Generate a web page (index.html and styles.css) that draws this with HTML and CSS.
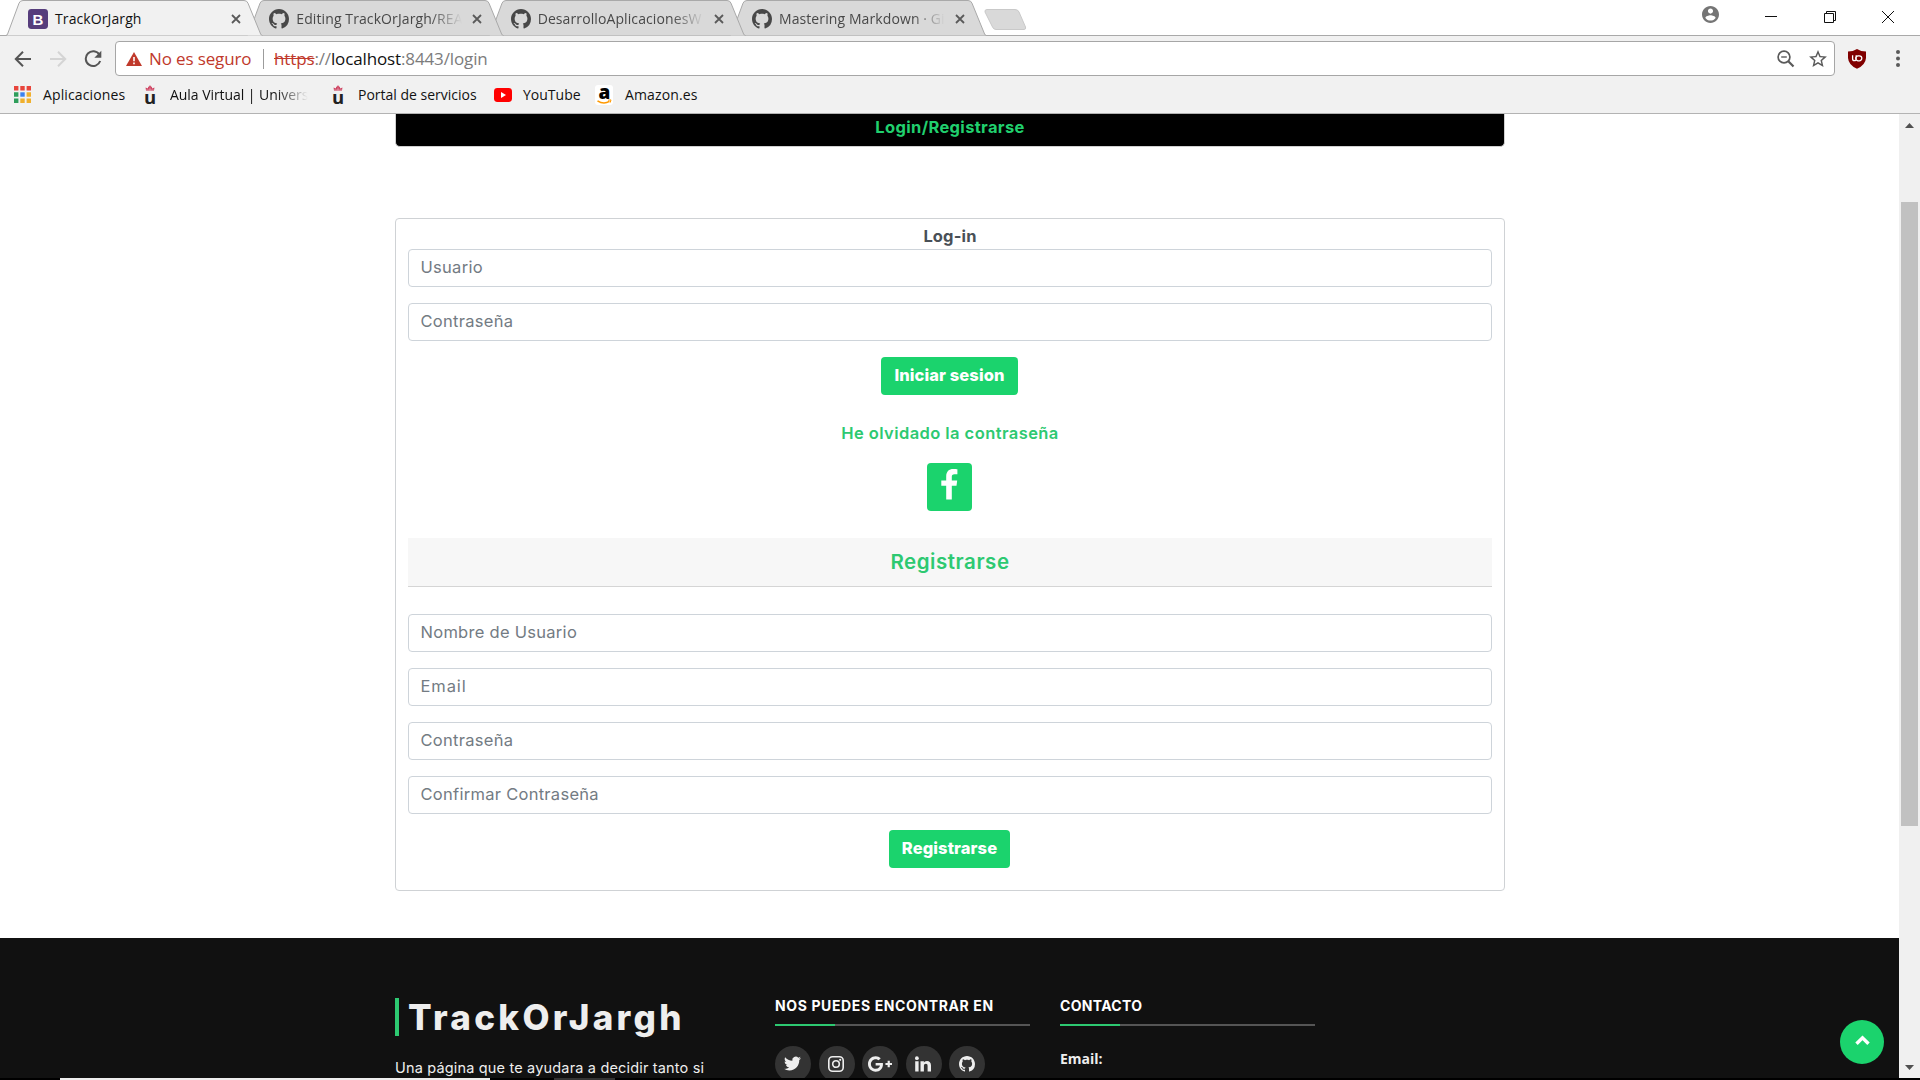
FILE: index.html
```
<!DOCTYPE html>
<html lang="es">
<head>
<meta charset="utf-8">
<title>TrackOrJargh</title>
<link rel="stylesheet" href="styles.css">
</head>
<body>
<svg class="defs" width="0" height="0">
  <symbol id="github" viewBox="0 0 16 16"><path d="M8 0C3.58 0 0 3.58 0 8c0 3.54 2.29 6.53 5.47 7.59.4.07.55-.17.55-.38 0-.19-.01-.82-.01-1.49-2.01.37-2.53-.49-2.69-.94-.09-.23-.48-.94-.82-1.13-.28-.15-.68-.52-.01-.53.63-.01 1.08.58 1.23.82.72 1.21 1.87.87 2.33.66.07-.52.28-.87.51-1.07-1.78-.2-3.64-.89-3.64-3.95 0-.87.31-1.59.82-2.15-.08-.2-.36-1.02.08-2.12 0 0 .67-.21 2.2.82.64-.18 1.32-.27 2-.27s1.36.09 2 .27c1.53-1.04 2.2-.82 2.2-.82.44 1.1.16 1.92.08 2.12.51.56.82 1.27.82 2.15 0 3.07-1.87 3.75-3.65 3.95.29.25.54.73.54 1.48 0 1.07-.01 1.93-.01 2.2 0 .21.15.46.55.38A8.01 8.01 0 0 0 16 8c0-4.42-3.58-8-8-8z"/></symbol>
  <symbol id="tab-shape" viewBox="0 0 257 36"><path d="M0 35.5Q1 35.3 1.6 34L13 3.2Q14 .5 17 .5H238Q241 .5 242 3.2L254.6 34Q255.2 35.3 256.5 35.5"/></symbol>
  <symbol id="close" viewBox="0 0 10 10"><path d="M1 1l8 8M9 1L1 9" fill="none" stroke="#5a5a5a" stroke-width="1.8"/></symbol>
  <symbol id="crown" viewBox="0 0 16 20"><path d="M4 5.6L3.6 2.6 5.6 3.4 6.6 1.8 8 .2 9.4 1.8 10.4 3.4 12.4 2.6 12 5.6z" fill="#c8284b"/><path d="M4 4.2h8M8 0v5.5" stroke="#f1d5db" stroke-width=".5"/></symbol>
</svg>

<div class="window">
  <header class="tabstrip">
    <div class="tab tab-active">
      <svg class="tab-bg"><use href="#tab-shape"/></svg>
      <svg class="favicon" viewBox="0 0 20 20"><rect width="20" height="20" rx="3.4" fill="#563d7c"/><text x="10" y="15.6" text-anchor="middle" class="b-letter">B</text></svg>
      <span class="tab-title">TrackOrJargh</span>
      <svg class="tab-close"><use href="#close"/></svg>
    </div>
    <div class="tab tab-second">
      <svg class="tab-bg"><use href="#tab-shape"/></svg>
      <svg class="favicon"><use href="#github"/></svg>
      <span class="tab-title fade">Editing TrackOrJargh/REA</span>
      <svg class="tab-close"><use href="#close"/></svg>
    </div>
    <div class="tab tab-third">
      <svg class="tab-bg"><use href="#tab-shape"/></svg>
      <svg class="favicon"><use href="#github"/></svg>
      <span class="tab-title fade">DesarrolloAplicacionesW</span>
      <svg class="tab-close"><use href="#close"/></svg>
    </div>
    <div class="tab">
      <svg class="tab-bg"><use href="#tab-shape"/></svg>
      <svg class="favicon"><use href="#github"/></svg>
      <span class="tab-title fade">Mastering Markdown · Gi</span>
      <svg class="tab-close"><use href="#close"/></svg>
    </div>
    <svg class="new-tab" viewBox="0 0 43 21"><path d="M3 .5H31Q34 .5 35 3L41.5 18Q42.3 20.500 40 20.500H12Q9.500 20.500 8.500 18L1 3Q.5 .5 3 .5z" fill="#d9d9d9" stroke="#c9c9c9"/></svg>
    <div class="window-controls">
      <svg class="account" viewBox="2 2 20 20"><path fill="#757575" d="M12 2C6.480 2 2 6.480 2 12s4.480 10 10 10 10-4.480 10-10S17.520 2 12 2zm0 3c1.660 0 3 1.340 3 3s-1.340 3-3 3-3-1.340-3-3 1.340-3 3-3zm0 14.200c-2.500 0-4.710-1.280-6-3.220.030-1.990 4-3.080 6-3.080 1.990 0 5.970 1.090 6 3.080-1.290 1.940-3.500 3.220-6 3.220z"/></svg>
      <svg class="ctl" viewBox="0 0 12 12"><path d="M0 5.500h12"/></svg>
      <svg class="ctl" viewBox="0 0 12 12"><path d="M.5 2.500h9v9h-9zM2.500 2.500v-2h9v9h-2"/></svg>
      <svg class="ctl" viewBox="0 0 12 12"><path d="M0 0l12 12M12 0L0 12"/></svg>
    </div>
  </header>

  <div class="toolbar">
    <svg class="nav-icon" viewBox="0 0 18 18"><path d="M17 9H2M9 1.800L1.800 9 9 16.200" fill="none" stroke="#555" stroke-width="2"/></svg>
    <svg class="nav-icon" viewBox="0 0 18 18"><path d="M1 9h15M9 1.800L16.200 9 9 16.200" fill="none" stroke="#d4d4d4" stroke-width="2"/></svg>
    <svg class="nav-icon" viewBox="0 0 18 18"><path d="M15.400 4.600A7.400 7.400 0 1 0 16.200 11" fill="none" stroke="#555" stroke-width="2"/><path d="M17.300 .8v7h-7z" fill="#555"/></svg>
    <div class="omnibox">
      <svg class="warning" viewBox="0 0 16 14"><path d="M8 0l8 14H0z" fill="#c0392b"/><path d="M8 5v4.200M8 10.500v1.700" stroke="#fff" stroke-width="1.600"/></svg>
      <span class="insecure">No es seguro</span>
      <span class="divider"></span>
      <span class="url"><s>https</s>://<b>localhost</b>:8443/login</span>
      <svg class="zoom-out" viewBox="0 0 18 18"><g fill="none" stroke="#5a5a5a"><circle cx="7" cy="7" r="5.900" stroke-width="1.700"/><path d="M4.200 7h5.600" stroke-width="1.400"/><path d="M11.300 11.300l5.200 5.200" stroke-width="2.200"/></g></svg>
      <svg class="star" viewBox="2 2 20 19"><path fill="#5a5a5a" d="M22 9.240l-7.190-.62L12 2 9.190 8.630 2 9.240l5.460 4.730L5.820 21 12 17.270 18.180 21l-1.630-7.030L22 9.240zM12 15.400l-3.760 2.270 1-4.280-3.320-2.880 4.380-.38L12 6.100l1.710 4.040 4.380.38-3.320 2.880 1 4.280L12 15.400z"/></svg>
    </div>
    <svg class="shield" viewBox="0 0 18 20"><path d="M9 0Q13 2.600 18 2.600V9Q17.500 16 9 19.800.5 16 0 9V2.600Q5 2.600 9 0z" fill="#800000"/><path d="M4.600 6.200v3.500q0 2 1.800 2t1.800-2V6.200M10.200 6.800h1.100a2.500 2.500 0 0 1 0 5h-1.100a2.500 2.500 0 0 1 0-5z" fill="none" stroke="#fff" stroke-width="1.300"/></svg>
    <svg class="dots" viewBox="0 0 4 17"><circle cx="2" cy="2" r="2"/><circle cx="2" cy="8.500" r="2"/><circle cx="2" cy="15" r="2"/></svg>
  </div>

  <nav class="bookmarks">
    <a class="bookmark">
      <svg width="17" height="17" viewBox="0 0 17 17"><path d="M0 0h4.400v4.400H0zM6.300 0h4.400v4.400H6.300zM12.600 0H17v4.400h-4.400z" fill="#e8453c"/><path d="M0 6.300h4.400v4.400H0zM0 12.600h4.400V17H0z" fill="#2f9e5b"/><path d="M6.300 6.300h4.400v4.400H6.300z" fill="#3b82f0"/><path d="M12.600 6.300H17v4.400h-4.400zM6.300 12.600h4.400V17H6.300zM12.600 12.600H17V17h-4.400z" fill="#f0b02d"/></svg>
      <span class="apps-label">Aplicaciones</span>
    </a>
    <a class="bookmark"><svg width="16" height="20" viewBox="0 0 16 20"><use href="#crown"/><text x="8" y="18.800" text-anchor="middle" class="crown-letter">u</text></svg><span class="fade tight">Aula Virtual | Universi</span></a>
    <a class="bookmark"><svg width="16" height="20" viewBox="0 0 16 20"><use href="#crown"/><text x="8" y="18.800" text-anchor="middle" class="crown-letter">u</text></svg><span>Portal de servicios</span></a>
    <a class="bookmark"><svg width="18" height="14" viewBox="0 0 18 14"><rect width="18" height="14" rx="3.400" fill="#f00"/><path d="M7 4l5 3-5 3z" fill="#fff"/></svg><span class="youtube-label">YouTube</span></a>
    <a class="bookmark"><svg width="18" height="20" viewBox="0 0 18 20"><rect width="18" height="20" rx="3" fill="#fff"/><text x="9.300" y="14" text-anchor="middle" class="a-letter">a</text><path d="M2.500 15.800q6 4 12 .6" fill="none" stroke="#f90" stroke-width="1.600"/><path d="M13 15.200l3-.3-.8 2.700" fill="none" stroke="#f90"/></svg><span class="apps-label">Amazon.es</span></a>
  </nav>

  <div class="viewport">
    <main class="page">
      <div class="container">
        <div class="login-header">Login/Registrarse</div>
        <form class="card">
          <label class="login-label">Log-in</label>
          <div class="fields">
            <input type="text" placeholder="Usuario">
            <input type="password" placeholder="Contraseña">
          </div>
          <button type="button" class="btn">Iniciar sesion</button>
          <a class="forgot">He olvidado la contraseña</a>
          <a class="facebook"><svg width="17" height="31" viewBox="0 0 17 31"><path d="M16.400 .3V5.200h-2.900c-2.200 0-2.700 1-2.700 2.600v3.600h5.400l-.7 5.400h-4.700V30.500H5.200V16.800H.3v-5.400h4.900V7.200C5.200 2.600 8 0 12.200 0c2 0 3.700.1 4.200.3z" fill="#fff"/></svg></a>
          <h5 class="register-title">Registrarse</h5>
          <div class="fields">
            <input type="text" placeholder="Nombre de Usuario">
            <input type="text" class="email-input" placeholder="Email">
            <input type="password" placeholder="Contraseña">
            <input type="password" placeholder="Confirmar Contraseña">
          </div>
          <button type="button" class="btn">Registrarse</button>
        </form>
      </div>
      <footer class="footer">
        <section class="about">
          <h3 class="logo">TrackOrJargh</h3>
          <p class="about-text">Una página que te ayudara a decidir tanto si</p>
        </section>
        <section class="links">
          <h4 class="wide">NOS PUEDES ENCONTRAR EN</h4>
          <div class="rule"></div>
          <div class="social">
            <a><svg width="17" height="17" viewBox="0 0 24 24"><path d="M23.953 4.570a10 10 0 01-2.825.775 4.958 4.958 0 002.163-2.723c-.951.555-2.005.959-3.127 1.184a4.920 4.920 0 00-8.384 4.482C7.690 8.095 4.067 6.130 1.640 3.162a4.822 4.822 0 00-.666 2.475c0 1.710.870 3.213 2.188 4.096a4.904 4.904 0 01-2.228-.616v.060a4.923 4.923 0 003.946 4.827 4.996 4.996 0 01-2.212.085 4.936 4.936 0 004.604 3.417 9.867 9.867 0 01-6.102 2.105c-.390 0-.779-.023-1.170-.067a13.995 13.995 0 007.557 2.209c9.053 0 13.998-7.496 13.998-13.985 0-.210 0-.420-.015-.630A9.935 9.935 0 0024 4.590z"/></svg></a>
            <a><svg width="16" height="16" viewBox="0 0 16 16"><g fill="none" stroke="#eee" stroke-width="1.600"><rect x=".8" y=".8" width="14.400" height="14.400" rx="3.800"/><circle cx="8" cy="8" r="3.300"/></g><circle cx="12.200" cy="3.800" r="1.100"/></svg></a>
            <a><svg width="24" height="24" viewBox="0 0 24 24"><path d="M7.635 10.909v2.619h4.335c-.173 1.125-1.310 3.295-4.331 3.295-2.604 0-4.731-2.160-4.731-4.823 0-2.662 2.122-4.822 4.728-4.822 1.485 0 2.479.633 3.045 1.178l2.073-1.994c-1.330-1.245-3.056-1.995-5.115-1.995C3.412 4.365 0 7.785 0 12s3.414 7.635 7.635 7.635c4.410 0 7.332-3.098 7.332-7.461 0-.501-.054-.885-.120-1.265H7.635zm16.365 0h-2.183V8.726h-2.183v2.183h-2.182v2.184h2.184v2.189h2.189v-2.189H24"/></svg></a>
            <a><svg width="16" height="16" viewBox="0 0 16 16"><path d="M.2 5.200h3.400v10.300H.2zM5.500 5.200h3.400v1.500C9.400 5.900 10.300 5 12 5c2.400 0 4 1.500 4 4.600v5.900h-3.400V10c0-1.400-.5-2.300-1.700-2.300-1.300 0-2 .9-2 2.200v5.600H5.500z"/><circle cx="1.900" cy="2.200" r="1.900"/></svg></a>
            <a><svg width="16" height="16"><use href="#github"/></svg></a>
          </div>
        </section>
        <section class="links">
          <h4>CONTACTO</h4>
          <div class="rule"></div>
          <p class="email">Email:</p>
        </section>
      </footer>
      <a class="back-to-top"><svg width="15" height="11" viewBox="0 0 15 11"><path d="M1.500 8.800l6-6 6 6" fill="none" stroke="#fff" stroke-width="3.400"/></svg></a>
    </main>
    <div class="scrollbar">
      <svg width="9" height="5" viewBox="0 0 9 5"><path d="M0 5l4.500-5L9 5z"/></svg>
      <div class="track"><div class="thumb"></div></div>
      <svg width="9" height="5" viewBox="0 0 9 5"><path d="M0 0l4.500 5L9 0z"/></svg>
    </div>
  </div>
  <div class="taskbar"><i class="task-light"></i><i class="task-dark"></i></div>
</div>
</body>
</html>
```
FILE: styles.css
```
* { box-sizing: border-box; }

body {
  margin: 0;
  overflow: hidden;
  background: #fff;
  font-family: "Open Sans", "Noto Sans", sans-serif;
  font-size: 14px;
  color: #111;
}

svg { display: block; flex: none; }
.defs { position: absolute; }

.window {
  display: flex;
  flex-direction: column;
  width: 1920px;
  height: 1080px;
}

/* Tab strip */
.tabstrip {
  display: flex;
  height: 36px;
  padding-left: 6px;
  background: linear-gradient(#fff 35px, #a9a9a9 35px);
}

.tab {
  position: relative;
  display: flex;
  align-items: center;
  width: 257px;
  height: 36px;
  margin-right: -15.7px;
  padding: 1px 0 0 22px;
  color: #484848;
  fill: #484848;
}
.tab-active { z-index: 3; color: #111; }
.tab-second { z-index: 2; }
.tab-third { z-index: 1; }

.tab-bg {
  position: absolute;
  left: 0;
  top: 0;
  width: 257px;
  height: 36px;
  fill: #d9d9d9;
  stroke: #a9a9a9;
}
.tab-active .tab-bg { fill: #f1f1f1; }

.favicon, .tab-title, .tab-close { position: relative; }
.favicon { width: 20px; height: 20px; }
.b-letter { font: 700 15px "Liberation Sans", sans-serif; fill: #fff; }
.tab-title {
  width: 168px;
  margin-left: 7px;
  white-space: nowrap;
  letter-spacing: .1px;
  line-height: 22px;
}
.fade {
  -webkit-mask-image: linear-gradient(to left, transparent 2px, #000 34px);
  mask-image: linear-gradient(to left, transparent 2px, #000 34px);
}
.tab-close { width: 10px; height: 10px; margin-left: 8px; }
.new-tab { width: 43px; height: 21px; margin: 9px 0 0 13px; }

.window-controls {
  display: flex;
  gap: 46.500px;
  margin: 6px 26px 0 auto;
}
.account { width: 17px; height: 17px; }
.ctl {
  width: 12px;
  height: 12px;
  margin-top: 5px;
  overflow: visible;
  fill: none;
  stroke: #111;
  stroke-width: 1;
}

/* Toolbar */
.toolbar {
  display: flex;
  align-items: center;
  height: 45px;
  padding: 0 20px 0 14px;
  background: #f1f1f1;
}
.nav-icon { width: 18px; height: 18px; margin-right: 17px; }
.nav-icon + .nav-icon + .nav-icon { margin-right: 13px; }

.omnibox {
  display: flex;
  align-items: center;
  width: 1720px;
  height: 35px;
  padding: 0 7px 0 10px;
  border: 1px solid #a6a6a6;
  border-radius: 4px;
  background: #fff;
  font-size: 17px;
  line-height: 24px;
  letter-spacing: -.13px;
}
.warning { width: 16px; height: 14px; }
.insecure { width: 114px; padding-left: 7px; color: #c0392b; white-space: nowrap; }
.divider { width: 1px; height: 20px; margin-left: 7px; background: #9c9c9c; }
.url { margin: 0 auto 0 10px; color: #7c7c7c; }
.url s { color: #c0392b; }
.url b { font-weight: 400; color: #111; }
.zoom-out { width: 18px; height: 18px; margin-right: 14px; }
.star { width: 18px; height: 17px; }
.shield { width: 18px; height: 20px; margin-left: 13px; }
.dots { width: 4px; height: 17px; margin-left: auto; fill: #5a5a5a; }

/* Bookmarks bar */
.bookmarks {
  display: grid;
  grid-template-columns: 128px 188px 164px 101px auto;
  align-items: center;
  height: 33px;
  padding: 0 0 5px 14px;
  background: #f1f1f1;
  border-bottom: 1px solid #b3b3b3;
}
.bookmark { display: flex; align-items: center; gap: 12px; }
.bookmark span { line-height: 20px; white-space: nowrap; }
.bookmark .tight { width: 140px; letter-spacing: -.05px; }
.bookmark .apps-label { letter-spacing: .12px; }
.bookmark .youtube-label { margin-left: -1px; }
.crown-letter { font: 700 18.500px "Open Sans", sans-serif; fill: #222; }
.a-letter { font: 800 19px "Open Sans", sans-serif; fill: #000; }

/* Page */
.viewport { display: flex; height: 964px; }
.page {
  position: relative;
  flex: 1;
  display: flex;
  flex-direction: column;
  overflow: hidden;
  background: #fff;
  font-family: Inter, "Open Sans", sans-serif;
}
.container { width: 1110px; margin-left: 395px; }

.login-header {
  height: 33px;
  padding-top: 1px;
  border: 1px solid #d0d0d0;
  border-top: 0;
  border-radius: 0 0 5px 5px;
  background: #000;
  color: #20d06e;
  font-size: 16.500px;
  font-weight: 700;
  line-height: 24px;
  letter-spacing: .34px;
  text-align: center;
}

.card {
  display: flex;
  flex-direction: column;
  align-items: center;
  height: 673px;
  margin-top: 71px;
  padding: 5px 12px 0;
  border: 1px solid #cfd2d5;
  border-radius: 4px;
  font-size: 16.500px;
}
.login-label {
  height: 25px;
  line-height: 25px;
  font-weight: 700;
  letter-spacing: .15px;
  color: #495057;
}
.fields {
  display: flex;
  flex-direction: column;
  gap: 16px;
  width: 100%;
}
.fields input {
  width: 100%;
  height: 38px;
  padding: 0 11.500px 2px;
  border: 1px solid #ced4da;
  border-radius: 4px;
  background: #fff;
  font: 400 16.500px Inter, sans-serif;
  letter-spacing: .28px;
}
.fields .email-input { letter-spacing: .9px; }
.fields input::placeholder { color: #737b83; opacity: 1; }

.btn {
  height: 38px;
  margin: 16px 1px 0 0;
  padding: 0 13px 2px;
  border: 0;
  border-radius: 4px;
  background: #1bd36d;
  color: #fff;
  font: 800 16.500px Inter, sans-serif;
  letter-spacing: .1px;
}
.forgot {
  margin-top: 26px;
  line-height: 24px;
  font-weight: 600;
  letter-spacing: .43px;
  color: #2dc971;
}
.facebook {
  display: flex;
  justify-content: center;
  width: 45px;
  height: 48px;
  margin: 18px 1px 0 0;
  padding-top: 6px;
  border-radius: 4px;
  background: #1bd36d;
}
.register-title {
  width: 100%;
  height: 49px;
  margin: 27px 0;
  border-bottom: 1px solid #d5d5d5;
  background: #f7f7f7;
  font-size: 20.500px;
  font-weight: 600;
  line-height: 48px;
  letter-spacing: .55px;
  text-align: center;
  color: #2dc971;
}

/* Footer */
.footer {
  display: flex;
  height: 140px;
  margin-top: 47px;
  padding: 60px 0 0 395px;
  background: #111;
  color: #eee;
}
.about { width: 380px; }
.logo {
  height: 38px;
  margin: 0;
  padding-left: 9px;
  border-left: 4px solid #2dc971;
  font-size: 35px;
  font-weight: 800;
  line-height: 38px;
  letter-spacing: 3.300px;
}
.about-text {
  margin: 21px 0 0;
  font-size: 14.500px;
  line-height: 21px;
  letter-spacing: .17px;
}
.links { width: 255px; margin-right: 30px; }
.links h4 {
  margin: 0;
  padding-bottom: 10px;
  font-size: 14px;
  line-height: 16px;
  letter-spacing: .31px;
  color: #fff;
  white-space: nowrap;
}
.links .wide { letter-spacing: .62px; }
.rule { height: 2px; background: linear-gradient(to right, #2dc971 60px, #555 60px); }
.social { display: flex; gap: 7.500px; margin-top: 20px; }
.social a {
  display: flex;
  align-items: center;
  justify-content: center;
  width: 36px;
  height: 36px;
  padding: 0 1px 1px 0;
  border-radius: 50%;
  background: #333;
  fill: #eee;
}
.email {
  margin: 23px 0 0;
  font: 700 14px/20px "Open Sans", sans-serif;
}

.back-to-top {
  position: absolute;
  right: 15px;
  bottom: 14px;
  display: flex;
  justify-content: center;
  width: 44px;
  height: 44px;
  padding-top: 15px;
  border-radius: 50%;
  background: #1bd36d;
}

.scrollbar {
  display: flex;
  flex-direction: column;
  align-items: center;
  justify-content: space-between;
  width: 21px;
  padding: 9px 0 8px;
  background: #f0f0f0;
  fill: #505050;
}
.track { flex: 1; padding-top: 74px; }
.thumb { width: 17px; height: 624px; background: #c1c1c1; }

/* Visible edge of the taskbar */
.taskbar { display: flex; height: 2px; padding-left: 60px; background: #000; }
.task-light { width: 430px; background: #eee; }
.task-dark { width: 61px; margin-left: 64px; background: #333; }
```
